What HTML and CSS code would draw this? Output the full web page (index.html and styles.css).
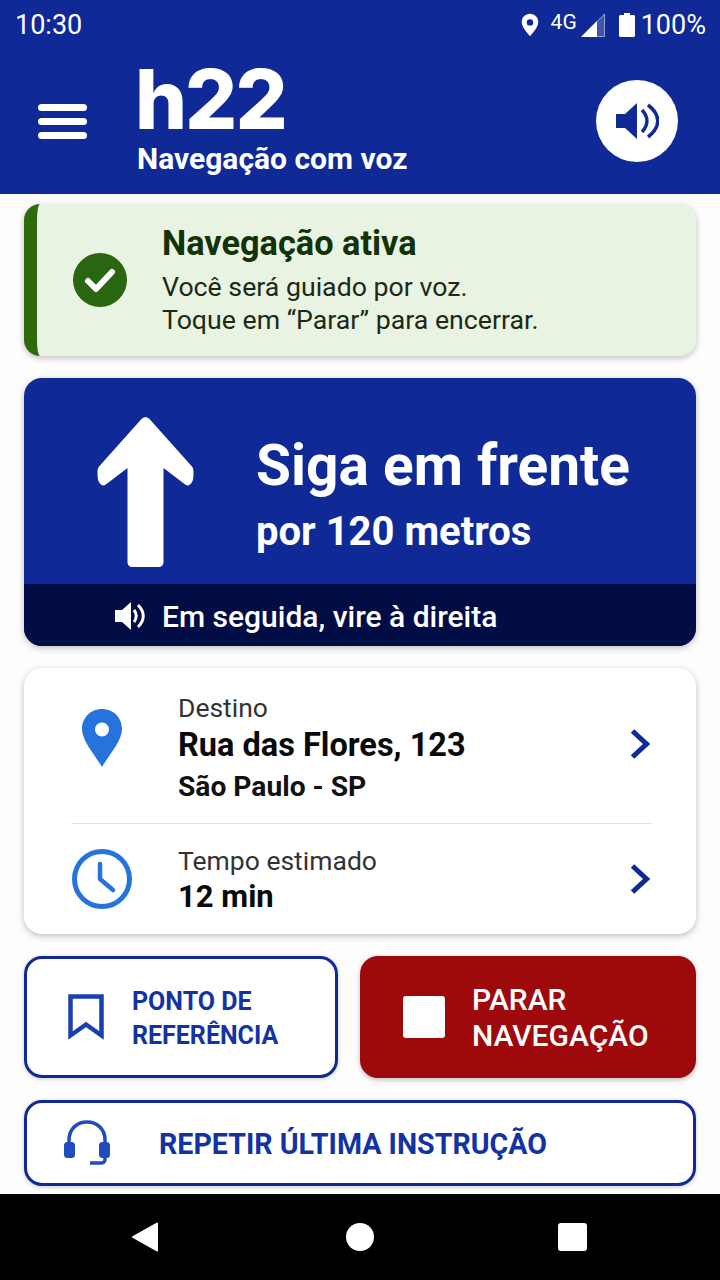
FILE: index.html
```html
<!doctype html>
<html lang="pt-BR">
<head>
    <title>h22 Navegação com voz</title>
    <meta charset="utf-8"/>
    <meta name="viewport" content="width=device-width, initial-scale=1"/>
    <link rel="stylesheet" href="styles.css">
</head>
<body>
<div class="phone">
    <header class="top">
        <div class="status">
            <span class="clock">10:30</span>
            <div class="status-right">
                <svg class="st-pin" viewBox="0 0 24 32"><path fill="#fff" fill-rule="evenodd" d="M12 1C5.600 1 1 5.800 1 12c0 7.600 8.300 15.300 11 19 2.700-3.700 11-11.400 11-19C23 5.800 18.400 1 12 1zm0 7.200a4.300 4.300 0 1 1 0 8.600 4.300 4.300 0 0 1 0-8.600z"/></svg>
                <span class="net">4G</span>
                <svg class="st-signal" viewBox="0 0 24 24"><path fill="#fff" fill-opacity=".2" stroke="#fff" stroke-opacity=".5" d="M23.500 1v22.500H1z"/><path fill="#fff" d="M16 8v16H0z"/></svg>
                <svg class="st-batt" viewBox="0 0 16 24"><path fill="#fff" d="M5 0h6v2h3.500c.8 0 1.500.7 1.500 1.500v19c0 .8-.7 1.500-1.500 1.500h-13C.7 24 0 23.300 0 22.500v-19C0 2.700.7 2 1.500 2H5z"/></svg>
                <span class="pct">100%</span>
            </div>
        </div>
        <div class="appbar">
            <div class="burger"><i></i><i></i><i></i></div>
            <div class="brand">
                <div class="logo">h22</div>
                <div class="tagline">Navegação com voz</div>
            </div>
            <div class="sound-btn">
                <svg viewBox="0 0 44 36"><path fill="#0f2a97" d="M1 11h9L22 0v36L10 25H1z"/><path fill="none" stroke="#0f2a97" stroke-width="3.500" d="M27 7c6.500 7 6.500 15 0 22M33 2c13 10 13 22 0 32"/></svg>
            </div>
        </div>
    </header>

    <main class="content">
        <section class="banner">
            <svg class="banner-check" viewBox="0 0 54 54"><circle cx="27" cy="27" r="27" fill="#2a6510"/><path fill="none" stroke="#fff" stroke-width="6" stroke-linecap="round" stroke-linejoin="round" d="M15 28l8 8 16-17"/></svg>
            <div>
                <h2 class="banner-title">Navegação ativa</h2>
                <p class="banner-text">Você será guiado por voz.<br>Toque em “Parar” para encerrar.</p>
            </div>
        </section>

        <section class="nav-card">
            <div class="nav-main">
                <svg class="nav-arrow" viewBox="0 0 96 150"><path fill="#fff" d="M44 2c2-2.500 6-2.500 8 0l42 47c2 2 2 4 2 8 0 4-.5 7-2 9-2 3-5 3-7 1L66 51v94c0 3-2 5-5 5H35c-3 0-5-2-5-5V51L9 67c-2 2-5 2-7-1-1.500-2-2-5-2-9 0-4 0-6 2-8z"/></svg>
                <div class="nav-text">
                    <div class="nav-title">Siga em frente</div>
                    <div class="nav-dist">por 120 metros</div>
                </div>
            </div>
            <div class="nav-next">
                <svg viewBox="0 0 30 28"><path fill="#fff" d="M0 8h7l9-8v28l-9-8H0z"/><path fill="none" stroke="#fff" stroke-width="3" d="M19 8c3 4 3 8 0 12M23 3c7 7 7 15 0 22"/></svg>
                <span>Em seguida, vire à direita</span>
            </div>
        </section>

        <section class="info-card">
            <div class="info-row info-dest">
                <div class="info-icon">
                    <svg class="pin" viewBox="0 0 40 58"><path fill="#2673dd" fill-rule="evenodd" d="M20 0C8.500 0 0 8.800 0 20c0 12 13 26 20 38 7-12 20-26 20-38C40 8.800 31.500 0 20 0zm0 13.500a7 7 0 1 1 0 14 7 7 0 0 1 0-14z"/></svg>
                </div>
                <div class="info-body">
                    <div class="info-label">Destino</div>
                    <div class="info-value">Rua das Flores, 123</div>
                    <div class="info-sub">São Paulo - SP</div>
                </div>
                <svg class="chev" viewBox="0 0 20 30"><path fill="none" stroke="#0f2a97" stroke-width="5" d="M2.500 2l14 13-14 13"/></svg>
            </div>
            <div class="info-row info-time">
                <div class="info-icon">
                    <svg class="clock-ic" viewBox="0 0 60 60"><circle cx="30" cy="30" r="27.500" fill="none" stroke="#2673dd" stroke-width="5"/><path fill="none" stroke="#2673dd" stroke-width="4.500" stroke-linecap="round" stroke-linejoin="round" d="M28 15v15l13 11"/></svg>
                </div>
                <div class="info-body">
                    <div class="info-label">Tempo estimado</div>
                    <div class="info-value small">12 min</div>
                </div>
                <svg class="chev" viewBox="0 0 20 30"><path fill="none" stroke="#0f2a97" stroke-width="5" d="M2.500 2l14 13-14 13"/></svg>
            </div>
        </section>

        <div class="btn-grid">
            <button class="btn btn-outline">
                <svg class="ic-mark" viewBox="0 0 36 46"><path fill="none" stroke="#1a3fae" stroke-width="4.500" d="M2.500 2.500h31v39L18 30.500 2.500 41.500z"/></svg>
                <span>PONTO DE<br>REFERÊNCIA</span>
            </button>
            <button class="btn btn-stop">
                <i class="stop-square"></i>
                <span>PARAR<br>NAVEGAÇÃO</span>
            </button>
        </div>
        <button class="btn btn-outline btn-repeat">
            <svg class="ic-head" viewBox="0 0 46 46"><path fill="none" stroke="#1f4dbd" stroke-width="3.500" d="M5 24V20C5 9 13 2 23 2s18 7 18 18v4"/><rect x="0" y="22" width="11" height="16" rx="3.500" fill="#1f4dbd"/><rect x="35" y="22" width="11" height="16" rx="3.500" fill="#1f4dbd"/><path fill="none" stroke="#1f4dbd" stroke-width="3.500" d="M41 37v3c0 2-2 3-4 3H26"/></svg>
            <span>REPETIR ÚLTIMA INSTRUÇÃO</span>
        </button>
    </main>

    <footer class="sysnav">
        <svg class="sys-back" viewBox="0 0 28 30"><path fill="#fff" d="M26 1.500v27L2 15z" stroke="#fff" stroke-linejoin="round" stroke-width="2"/></svg>
        <i class="sys-home"></i>
        <i class="sys-recent"></i>
    </footer>
</div>
</body>
</html>
```

FILE: styles.css
```css
* {
box-sizing: border-box;
}
html, body {
margin: 0;
padding: 0;
}
body {
background-color: #fdfdfe;
font-family: Roboto, "Noto Sans", Arial, sans-serif;
}
.phone {
width: 720px;
height: 1280px;
display: flex;
flex-direction: column;
overflow: hidden;
}

/* top bar */
.top {
height: 194px;
background-color: #0f2a97;
color: #fff;
flex: none;
}
.status {
height: 48px;
padding: 2px 14px 0 15px;
display: flex;
align-items: center;
justify-content: space-between;
}
.clock {
font-size: 27px;
}
.status-right {
display: flex;
align-items: center;
}
.st-pin {
width: 18px;
height: 24px;
margin-right: 12px;
}
.net {
font-size: 21px;
margin: -6px 4px 0 0;
}
.st-signal {
width: 24px;
height: 24px;
margin-right: 14px;
}
.st-batt {
width: 16px;
height: 24px;
margin-right: 6px;
}
.pct {
font-size: 27px;
}
.appbar {
height: 146px;
padding: 0 42px 0 38px;
display: flex;
align-items: center;
}
.burger {
width: 49px;
display: flex;
flex-direction: column;
gap: 7px;
}
.burger i {
display: block;
height: 7px;
background-color: #fff;
border-radius: 4px;
}
.brand {
margin-left: 50px;
margin-top: -2px;
flex: 1;
}
.logo {
font-family: Inter, Roboto, sans-serif;
font-size: 82px;
font-weight: 800;
line-height: 70px;
letter-spacing: -2px;
margin-left: -2px;
}
.tagline {
font-size: 30px;
font-weight: 700;
line-height: 34px;
margin-top: 7px;
}
.sound-btn {
width: 82px;
height: 82px;
border-radius: 50%;
background-color: #fff;
display: flex;
align-items: center;
justify-content: center;
}
.sound-btn svg {
width: 44px;
height: 36px;
}

/* content */
.content {
flex: 1;
padding: 10px 24px 0;
display: flex;
flex-direction: column;
gap: 22px;
}
.banner {
height: 152px;
background-color: #e9f3e2;
border-left: 13px solid #2e6b0a;
border-radius: 16px;
box-shadow: 0 2px 6px rgba(0, 0, 0, .25);
display: flex;
align-items: center;
padding-left: 36px;
gap: 35px;
}
.banner-check {
width: 54px;
height: 54px;
flex: none;
}
.banner-title {
margin: 0 0 8px;
font-size: 34.3px;
line-height: 40px;
font-weight: 700;
color: #123208;
}
.banner-text {
margin: 0;
font-size: 26.7px;
line-height: 33px;
color: #1c2a16;
}
.nav-card {
height: 268px;
border-radius: 18px;
background-color: #0f2a97;
overflow: hidden;
color: #fff;
box-shadow: 0 2px 6px rgba(0, 0, 0, .25);
display: flex;
flex-direction: column;
}
.nav-main {
height: 206px;
display: flex;
align-items: center;
padding-left: 73px;
gap: 62px;
}
.nav-arrow {
width: 97px;
height: 150px;
flex: none;
margin-top: 22px;
}
.nav-text {
margin-top: 26px;
}
.nav-title {
font-size: 56.8px;
font-weight: 700;
line-height: 66px;
}
.nav-dist {
font-size: 40px;
font-weight: 700;
line-height: 46px;
margin-top: 10px;
}
.nav-next {
height: 62px;
background-color: #020d45;
display: flex;
align-items: center;
padding: 2px 0 0 91px;
gap: 17px;
font-size: 30px;
font-weight: 500;
}
.nav-next svg {
width: 30px;
height: 28px;
margin-top: -1px;
}
.info-card {
height: 266px;
background-color: #fff;
border-radius: 18px;
box-shadow: 0 2px 6px rgba(0, 0, 0, .25);
padding: 0 44px 0 47px;
display: flex;
flex-direction: column;
}
.info-row {
display: flex;
align-items: center;
}
.info-dest {
height: 156px;
border-bottom: 1px solid #e2e2e2;
}
.info-dest .info-icon {
margin-top: -16px;
}
.info-dest .chev {
margin-top: -4px;
}
.info-dest .info-label {
margin-top: -1px;
margin-bottom: 1px;
}
.info-dest .info-body {
padding-top: 8px;
}
.info-time {
flex: 1;
}
.info-time .info-label {
margin-top: -1px;
margin-bottom: 1px;
}
.info-time .info-body {
padding-top: 4px;
}
.info-icon {
width: 62px;
flex: none;
display: flex;
justify-content: center;
margin-right: 45px;
}
.pin {
width: 40px;
height: 58px;
}
.clock-ic {
width: 60px;
height: 60px;
}
.info-body {
flex: 1;
}
.info-label {
font-size: 26.5px;
line-height: 32px;
color: #333;
}
.info-value {
font-size: 32.5px;
font-weight: 700;
line-height: 40px;
color: #0a0a0a;
}
.info-value.small {
font-size: 31px;
line-height: 38px;
margin-top: 1px;
}
.info-sub {
font-size: 28.2px;
font-weight: 700;
line-height: 38px;
margin-top: 3px;
color: #111;
}
.chev {
width: 20px;
height: 30px;
flex: none;
margin-right: 2px;
}

/* buttons */
.btn-grid {
display: grid;
grid-template-columns: 314px 336px;
gap: 22px;
}
.btn {
font-family: inherit;
font-weight: 700;
border-radius: 18px;
display: flex;
align-items: center;
text-align: left;
padding: 0;
margin: 0;
}
.btn-outline {
background-color: #fff;
border: 3px solid #0f2a97;
color: #1233a2;
box-shadow: 0 1px 4px rgba(0, 0, 0, .2);
}
.btn-grid .btn {
height: 122px;
}
.btn-grid .btn-outline {
font-size: 25px;
line-height: 34px;
padding: 4px 0 0 41px;
gap: 28px;
}
.ic-mark {
width: 36px;
height: 46px;
flex: none;
margin-top: -4px;
}
.btn-stop {
background-color: #9e0a0c;
border: 0;
color: #fff;
font-size: 30px;
font-weight: 500;
line-height: 36px;
padding: 2px 0 0 43px;
gap: 27px;
box-shadow: 0 2px 5px rgba(0, 0, 0, .25);
}
.stop-square {
width: 42px;
height: 42px;
background-color: #fff;
border-radius: 3px;
flex: none;
margin-top: -2px;
}
.btn-repeat {
height: 86px;
flex: none;
font-size: 28.6px;
padding: 2px 0 0 37px;
gap: 49px;
}
.ic-head {
width: 46px;
height: 46px;
flex: none;
margin-top: -2px;
}

/* android nav */
.sysnav {
height: 86px;
flex: none;
margin-top: 8px;
background-color: #000;
position: relative;
}
.sys-back {
position: absolute;
left: 131px;
top: 28px;
width: 28px;
height: 30px;
}
.sys-home {
position: absolute;
left: 346px;
top: 29px;
width: 28px;
height: 28px;
border-radius: 50%;
background-color: #fff;
}
.sys-recent {
position: absolute;
left: 558px;
top: 29px;
width: 29px;
height: 28px;
border-radius: 3px;
background-color: #fff;
}
```
